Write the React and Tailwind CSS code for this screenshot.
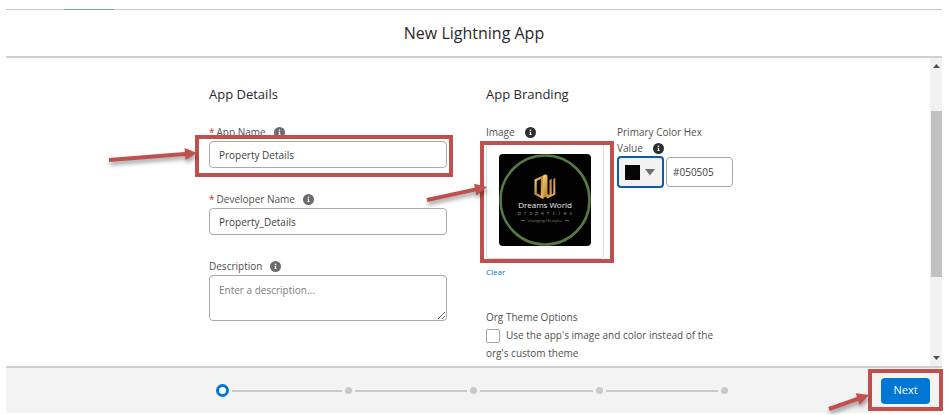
import { useState } from "react";

const inputClass =
  "block w-full rounded-[4px] border border-[#aaa9a7] bg-white px-[9px] text-[10px] text-[#3e3e3c] placeholder:text-[#807e7b] outline-none";

function InfoIcon({ dark = false }) {
  return (
    <svg viewBox="0 0 11 11" className={`size-[11px] shrink-0 ${dark ? "ml-[10px]" : "ml-2"}`} aria-hidden="true">
      <circle cx="5.500" cy="5.500" r="5.500" fill={dark ? "#2f2f2f" : "#6b6b69"} />
      <circle cx="5.500" cy="3.200" r="0.8" fill="#fff" />
      <path d="M4.500 4.700h1.600v2.500h.6v.8H4.300v-.8h.6V5.500h-.4z" fill="#fff" />
    </svg>
  );
}

function Label({ htmlFor, required, children }) {
  return (
    <div className="flex h-[18px] items-center">
      <label htmlFor={htmlFor} className="flex gap-[2px]">
        {required && <span className="text-[#c23934]">*</span>}
        {children}
      </label>
      <InfoIcon />
    </div>
  );
}

function Highlight({ className }) {
  return <div className={`pointer-events-none absolute z-10 border-4 border-[#c0504d] ${className}`} />;
}

function Arrow({ className, width, height, x1, y1, x2, y2 }) {
  const length = Math.hypot(x2 - x1, y2 - y1);
  const angle = (Math.atan2(y2 - y1, x2 - x1) * 180) / Math.PI;
  return (
    <svg
      width={width}
      height={height}
      className={`pointer-events-none absolute z-20 overflow-visible drop-shadow-[1px_3px_2px_rgba(0,0,0,0.4)] ${className}`}
      aria-hidden="true"
    >
      <g transform={`translate(${x1} ${y1}) rotate(${angle})`} fill="#c0504d">
        <rect x="0" y="-2" width={length - 9} height="4" />
        <path d={`M${length} 0l-12 -6v12z`} />
      </g>
    </svg>
  );
}

function BrandLogo() {
  return (
    <svg viewBox="0 0 92 92" className="size-[92px]" role="img" aria-label="Dreams World properties">
      <defs>
        <linearGradient id="gold" x1="0" y1="0" x2="1" y2="1">
          <stop offset="0" stopColor="#f7d98a" />
          <stop offset="0.5" stopColor="#c98a2b" />
          <stop offset="1" stopColor="#f0c463" />
        </linearGradient>
      </defs>
      <rect width="92" height="92" rx="4" fill="#020202" />
      <circle cx="46" cy="46" r="44.5" fill="none" stroke="#59783f" strokeWidth="2.6" />
      <g fill="url(#gold)" fillRule="evenodd">
        <path d="M35.500 25.500L44 21.500V45l-8.500-4.500zM37.800 27v12.200l4 2.300V25z" />
        <path d="M44 21.500l2.500-1.200v22.200L44 45zM46.500 20.300l2 1.200V40l2 1.200V26l2.200-1.200v15.700l1.600-.9V25l2-1v16.500L48.500 44.500l-2-2z" />
      </g>
      <text x="46" y="54" textAnchor="middle" fill="#efefef" className="font-[Open_Sans,sans-serif] text-[8px]">
        Dreams World
      </text>
      <g fill="#8f8f8f" textAnchor="middle" className="font-[Open_Sans,sans-serif] text-[5px]">
        {[..."properties"].map((letter, i) => (
          <text key={i} x={20.5 + i * 5.7} y="61">
            {letter}
          </text>
        ))}
      </g>
      <text x="46" y="68" textAnchor="middle" fill="#7b8f68" className="font-[Open_Sans,sans-serif] text-[4px]">
        changing lifestyles
      </text>
      <path d="M22 66.500h4M66 66.500h4" stroke="#8b8b8b" strokeWidth="0.7" />
    </svg>
  );
}

function AppDetails() {
  const [name, setName] = useState("Property Details");
  const [devName, setDevName] = useState("Property_Details");
  return (
    <section className="w-[238px] shrink-0">
      <h2 className="mb-[19px] text-[13px] leading-5 text-[#2b2826]">App Details</h2>
      <div className="flex flex-col gap-[22px]">
        <div className="relative">
          <Label htmlFor="app-name" required>App Name</Label>
          <input id="app-name" className={`${inputClass} h-[27px]`} value={name} onChange={(e) => setName(e.target.value)} />
          <Highlight className="-right-[6px] -bottom-[9px] -left-[14px] h-[42px]" />
          <Arrow className="-left-[100px] top-[25px]" width={90} height={18} x1={0} y1={12} x2={88} y2={5} />
        </div>
        <div>
          <Label htmlFor="dev-name" required>Developer Name</Label>
          <input id="dev-name" className={`${inputClass} h-[27px]`} value={devName} onChange={(e) => setDevName(e.target.value)} />
        </div>
        <div>
          <Label htmlFor="description">Description</Label>
          <textarea id="description" placeholder="Enter a description..." className={`${inputClass} h-[46px] resize-y py-[6px] leading-4`} />
        </div>
      </div>
    </section>
  );
}

function AppBranding() {
  const [hex, setHex] = useState("#050505");
  return (
    <section className="w-[247px] shrink-0">
      <h2 className="mb-[19px] text-[13px] leading-5 text-[#2b2826]">App Branding</h2>
      <div className="flex gap-[13px]">
        <div className="w-[118px]">
          <div className="flex h-[18px] items-center">
            Image
            <InfoIcon dark />
          </div>
          <div className="relative flex h-[118px] items-center justify-center rounded-[4px] border border-[#dddbda]">
            <BrandLogo />
            <Highlight className="-top-[1px] -right-[11px] -bottom-[5px] -left-[7px]" />
            <Arrow className="-left-[60px] top-[42px]" width={62} height={20} x1={0} y1={16} x2={60} y2={3} />
          </div>
          <button type="button" className="mt-[5px] block text-[8px] leading-4 text-[#0070d2]">Clear</button>
        </div>
        <div className="w-[116px]">
          <div className="leading-4">
            <label htmlFor="hex" className="block pt-px">Primary Color Hex</label>
            <div className="flex items-center">
              <label htmlFor="hex">Value</label>
              <InfoIcon dark />
            </div>
          </div>
          <div className="flex items-center gap-[2px]">
            <button
              type="button"
              aria-label="Choose color"
              className="flex h-[32px] w-[47px] shrink-0 items-center gap-[5px] rounded-[4px] border-2 border-[#0b5cab] bg-[#f3f2f2] pl-[6px]"
            >
              <span className="size-[15px] bg-[#050505]" />
              <svg viewBox="0 0 10 7" className="h-[7px] w-[10px]" aria-hidden="true">
                <path d="M0 0h10L5 6.500z" fill="#706e6b" />
              </svg>
            </button>
            <input id="hex" value={hex} onChange={(e) => setHex(e.target.value)} className="h-[30px] w-[67px] rounded-[4px] border border-[#aaa9a7] px-[6px] text-[10px] text-[#3e3e3c] outline-none" />
          </div>
        </div>
      </div>
      <div className="mt-[28px] leading-[18px]">
        <h3>Org Theme Options</h3>
        <label className="block">
          <input type="checkbox" className="mr-[6px] size-[14px] appearance-none rounded-[2px] border border-[#a3a2a0] bg-white align-middle checked:bg-[#0070d2]" />
          Use the app's image and color instead of the org's custom theme
        </label>
      </div>
    </section>
  );
}

function Scrollbar() {
  return (
    <div className="flex w-[12px] shrink-0 flex-col items-center bg-[#f1f1f1]" aria-hidden="true">
      <svg viewBox="0 0 7 4" className="mt-[6px] h-[4px] w-[7px]"><path d="M0 4h7L3.500 0z" fill="#505050" /></svg>
      <div className="mt-[43px] h-[166px] w-[11px] self-end bg-[#c1c1c1]" />
      <svg viewBox="0 0 7 4" className="mt-auto mb-[6px] h-[4px] w-[7px]"><path d="M0 0h7L3.500 4z" fill="#505050" /></svg>
    </div>
  );
}

function Progress() {
  return (
    <ol className="flex items-center gap-[3px]" aria-label="Progress">
      <li className="-mr-[3px] size-[13px] shrink-0 rounded-full border-[3px] border-[#0176d3] bg-white" aria-current="step" />
      {[2, 3, 4, 5].map((step) => (
        <li key={step} className="flex flex-1 items-center gap-[3px]">
          <span className={`h-[2px] flex-1 bg-[#c9c9c9] ${step === 2 ? "ml-[3px]" : ""}`} />
          <span className="size-[7px] rounded-full bg-[#c9c9c9]" />
        </li>
      ))}
    </ol>
  );
}

export default function App() {
  return (
    <div className="flex h-screen flex-col bg-white pt-[9px] pr-[7px] pb-[2px] pl-[6px] font-['Open_Sans',sans-serif] text-[10px] text-[#514f4d]">
      <div className="h-px shrink-0 bg-[#c9c9c9] pl-[58px]">
        <div className="h-px w-[50px] bg-[#8199a3]" />
      </div>
      <header className="flex h-[48px] shrink-0 items-center justify-center border-b-2 border-[#d0d0d0]">
        <h1 className="text-[16px] leading-6 text-[#2b2826]">New Lightning App</h1>
      </header>
      <main className="flex min-h-0 flex-1">
        <div className="flex min-w-0 flex-1 justify-center gap-[39px] overflow-hidden pt-[26px] pl-[6px]">
          <AppDetails />
          <AppBranding />
        </div>
        <Scrollbar />
      </main>
      <footer className="grid h-[47px] shrink-0 grid-cols-[1fr_512px_1fr] items-center border-t-2 border-[#d0d0d0] bg-[#f3f3f3] pr-[4px]">
        <div />
        <Progress />
        <div className="relative mr-[8px] justify-self-end">
          <button type="button" className="block h-[26px] w-[49px] rounded-[4px] bg-[#0176d3] text-[11px] text-white">Next</button>
          <Highlight className="-top-[9px] -right-[13px] -bottom-[7px] -left-[13px]" />
          <Arrow className="-left-[52px] top-[14px]" width={42} height={18} x1={0} y1={17} x2={40} y2={3} />
        </div>
      </footer>
    </div>
  );
}
